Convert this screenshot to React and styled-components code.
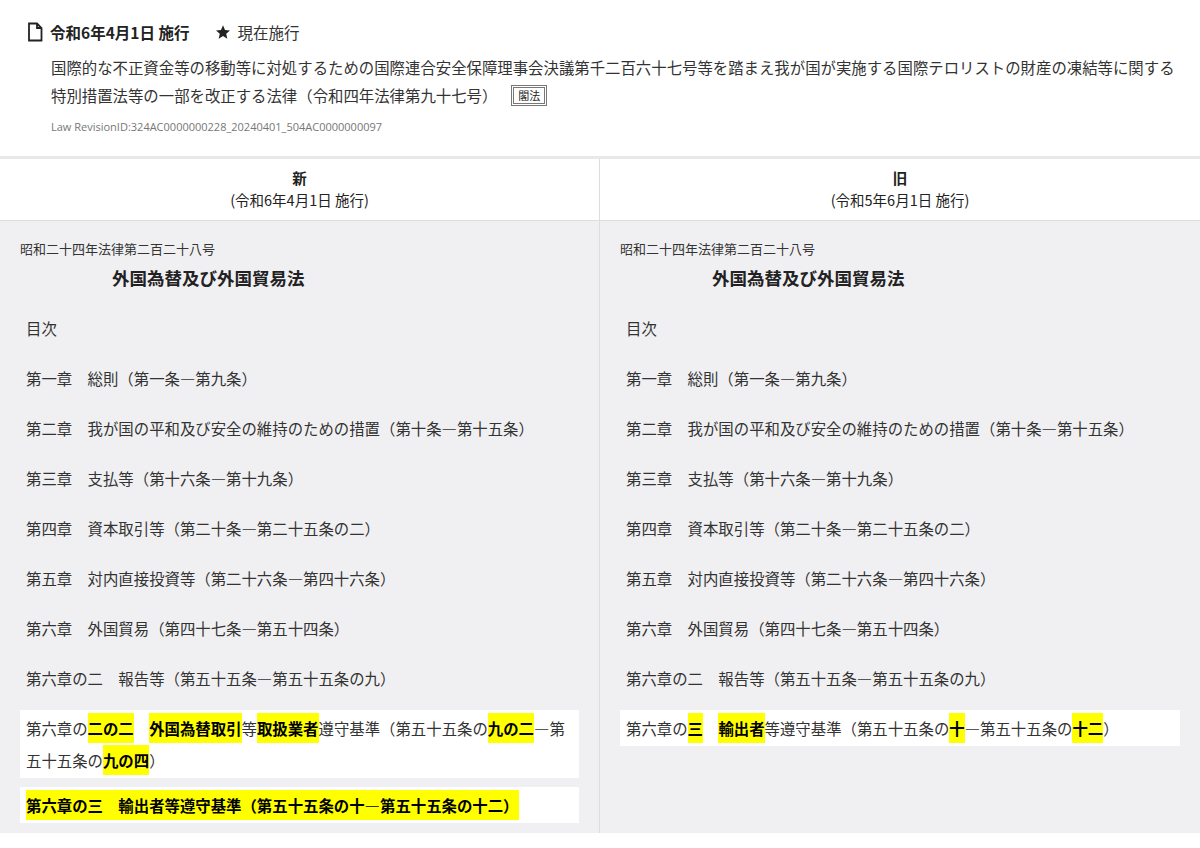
import React from 'react';
import styled, { createGlobalStyle } from 'styled-components';

const Global = createGlobalStyle`
  body { margin: 0; font-family: "Noto Sans CJK JP", "Noto Sans", sans-serif; color: #333; background: #fff; }
`;

const Header = styled.div`
  padding: 17px 24px 22px 26px;
  border-bottom: 3px solid #e8e8e8;
`;
const TitleRow = styled.div`
  display: flex; align-items: center; gap: 6px; font-size: 15.5px; line-height: 30px;
`;
const Bold = styled.span`font-weight: 700; margin-right: 20px; color: #222;`;
const LawName = styled.div`
  margin: 6px 0 0 25px; font-size: 15.4px; line-height: 28px; color: #333;
`;
const Btn = styled.span`
  display: inline-block; margin-left: 14px; border: 3px double #777; font-size: 11px; line-height: 15px;
  padding: 0 4px; color: #222; vertical-align: 2px;
`;
const RevId = styled.div`
  margin: 10px 0 0 25px; font-family: "Open Sans", sans-serif; font-size: 11px; color: #777;
`;
const Table = styled.div`
  display: grid; grid-template-columns: 600px 600px;
`;
const HeadCell = styled.div`
  text-align: center; padding: 8px 0 9px; font-size: 14.5px; line-height: 22px; border-bottom: 1px solid #ddd;
  border-right: ${p => (p.$last ? 'none' : '1px solid #ddd')}; color: #222;
`;
const Body = styled.div`
  background: #f0f0f2; padding: 18px 20px 10px; border-right: ${p => (p.$last ? 'none' : '1px solid #ddd')};
  font-size: 15.4px; color: #333; min-height: 582px;
`;
const Num = styled.div`font-size: 13px; line-height: 20px;`;
const LawTitle = styled.div`font-size: 17.5px; font-weight: 700; margin: 5px 0 0 92px; line-height: 28px; color: #222;`;
const Line = styled.div`padding: 14px 6px 0; line-height: 36px;`;
const Box = styled.div`
  background: #fff; margin-top: ${p => p.$mt || 12}px; padding: 2px 6px; line-height: 32px;
`;
const Hl = styled.mark`background: #ffff00; color: #000; font-weight: 700; line-height: 30px; display: inline-block;`;

const toc = [
  '目次',
  '第一章　総則（第一条―第九条）',
  '第二章　我が国の平和及び安全の維持のための措置（第十条―第十五条）',
  '第三章　支払等（第十六条―第十九条）',
  '第四章　資本取引等（第二十条―第二十五条の二）',
  '第五章　対内直接投資等（第二十六条―第四十六条）',
  '第六章　外国貿易（第四十七条―第五十四条）',
  '第六章の二　報告等（第五十五条―第五十五条の九）',
];

const Common = () => (
  <>
    <Num>昭和二十四年法律第二百二十八号</Num>
    <LawTitle>外国為替及び外国貿易法</LawTitle>
    {toc.map((t, i) => <Line key={i} style={i === 0 ? { paddingTop: 18 } : undefined}>{t}</Line>)}
  </>
);

const FileIcon = () => (
  <svg width="18" height="20" viewBox="0 0 18 20" fill="none" stroke="#222" strokeWidth="1.8">
    <path d="M3 1.5h8l4.5 4.5v12.5h-12.5z M11 1.5v4.5h4.5" />
  </svg>
);
const Star = () => (
  <svg width="16" height="16" viewBox="0 0 24 24" fill="#222">
    <path d="M12 2l3 6.9 7.5.7-5.7 5 1.7 7.4L12 18.1 5.5 22l1.7-7.4-5.7-5 7.5-.7z" />
  </svg>
);

export default function App() {
  return (
    <>
      <Global />
      <Header>
        <TitleRow>
          <FileIcon />
          <Bold>令和6年4月1日 施行</Bold>
          <Star />
          <span>現在施行</span>
        </TitleRow>
        <LawName>
          国際的な不正資金等の移動等に対処するための国際連合安全保障理事会決議第千二百六十七号等を踏まえ我が国が実施する国際テロリストの財産の凍結等に関する特別措置法等の一部を改正する法律（令和四年法律第九十七号）
          <Btn>閣法</Btn>
        </LawName>
        <RevId>Law RevisionID:324AC0000000228_20240401_504AC0000000097</RevId>
      </Header>
      <Table>
        <HeadCell><b>新</b><br />(令和6年4月1日 施行)</HeadCell>
        <HeadCell $last><b>旧</b><br />(令和5年6月1日 施行)</HeadCell>
        <Body>
          <Common />
          <Box $mt={14}>
            第六章の<Hl>二の二</Hl>　<Hl>外国為替取引</Hl>等<Hl>取扱業者</Hl>遵守基準（第五十五条の<Hl>九の二</Hl>―第五十五条の<Hl>九の四</Hl>）
          </Box>
          <Box $mt={9}><Hl>第六章の三　輸出者等遵守基準（第五十五条の十―第五十五条の十二）</Hl></Box>
        </Body>
        <Body $last>
          <Common />
          <Box $mt={14}>
            第六章の<Hl>三</Hl>　<Hl>輸出者</Hl>等遵守基準（第五十五条の<Hl>十</Hl>―第五十五条の<Hl>十二</Hl>）
          </Box>
        </Body>
      </Table>
    </>
  );
}
